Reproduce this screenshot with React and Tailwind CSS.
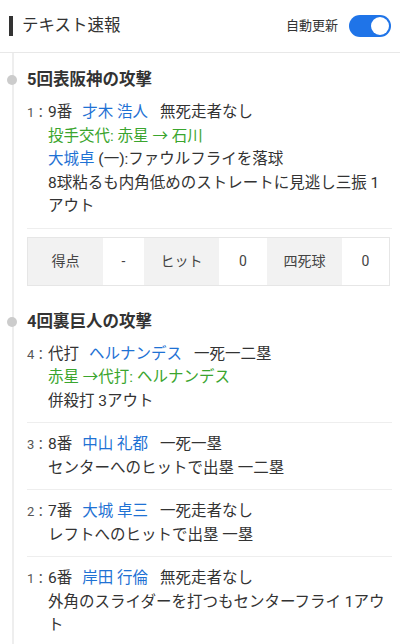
import React, { useState } from "react";

const blue = "text-[#1f72d4]";
const green = "text-[#3aa52e]";

function Head({ order, name, situation }) {
  return (
    <div>
      <span className="mr-[10px]">{order}</span>
      <span className={`${blue} mr-[12px]`}>{name}</span>
      <span>{situation}</span>
    </div>
  );
}

const sections = [
  {
    title: "5回表阪神の攻撃",
    events: [
      {
        no: 1,
        head: { order: "9番", name: "才木 浩人", situation: "無死走者なし" },
        lines: [
          <div className={green}>投手交代: 赤星 → 石川</div>,
          <div>
            <span className={blue}>大城卓</span> (一):ファウルフライを落球
          </div>,
          <div>
            8球粘るも内角低めのストレートに見逃し三振 1<br />アウト
          </div>,
        ],
      },
    ],
    stats: { score: "-", hit: "0", walk: "0" },
  },
  {
    title: "4回裏巨人の攻撃",
    events: [
      {
        no: 4,
        head: { order: "代打", name: "ヘルナンデス", situation: "一死一二塁" },
        lines: [
          <div className={green}>赤星 →代打: ヘルナンデス</div>,
          <div>併殺打 3アウト</div>,
        ],
      },
      {
        no: 3,
        head: { order: "8番", name: "中山 礼都", situation: "一死一塁" },
        lines: [<div>センターへのヒットで出塁 一二塁</div>],
      },
      {
        no: 2,
        head: { order: "7番", name: "大城 卓三", situation: "一死走者なし" },
        lines: [<div>レフトへのヒットで出塁 一塁</div>],
      },
      {
        no: 1,
        head: { order: "6番", name: "岸田 行倫", situation: "無死走者なし" },
        lines: [
          <div>
            外角のスライダーを打つもセンターフライ 1アウ<br />ト
          </div>,
        ],
      },
    ],
  },
];

function Stats({ stats }) {
  return (
    <div className="mt-[8px] flex h-[49px] border border-[#e6e6e6] text-[14px] text-[#444]">
      <div className="flex w-[75px] items-center justify-center bg-[#f2f2f2]">得点</div>
      <div className="flex w-[41px] items-center justify-center bg-white">{stats.score}</div>
      <div className="flex w-[75px] items-center justify-center bg-[#f2f2f2]">ヒット</div>
      <div className="flex w-[48px] items-center justify-center bg-white">{stats.hit}</div>
      <div className="flex w-[75px] items-center justify-center bg-[#f2f2f2]">四死球</div>
      <div className="flex flex-1 items-center justify-center bg-white">{stats.walk}</div>
    </div>
  );
}

export default function App() {
  const [auto, setAuto] = useState(true);

  return (
    <div className="min-h-screen bg-white font-[Roboto,'Noto_Sans_CJK_JP',sans-serif] text-[#333]">
      {/* header */}
      <div className="flex h-[53px] items-center justify-between border-b border-[#e8e8e8]">
        <div className="flex items-center">
          <div className="ml-[9px] h-[20px] w-[4px] bg-[#333]" />
          <h1 className="ml-[9px] text-[16.5px] leading-[24px]">テキスト速報</h1>
        </div>
        <div className="mr-[9px] flex items-center">
          <span className="mr-[11px] text-[13px]">自動更新</span>
          <button
            onClick={() => setAuto(!auto)}
            className={`flex h-[22px] w-[42px] items-center rounded-full px-[2px] ${
              auto ? "justify-end bg-[#1f74e8]" : "justify-start bg-[#ccc]"
            }`}
          >
            <span className="h-[18px] w-[18px] rounded-full bg-white" />
          </button>
        </div>
      </div>

      {/* timeline */}
      <div className="ml-[12px] border-l-2 border-[#eeeeee] pl-[13px] pr-[8px]">
        {sections.map((s, i) => (
          <div key={i} className={i === 0 ? "pt-[16px]" : "pt-[25px]"}>
            <div className="relative text-[16.5px] font-bold leading-[22px]">
              <span className="absolute left-[-20px] top-[6px] h-[10px] w-[10px] rounded-full bg-[#cccccc]" />
              {s.title}
            </div>
            {s.events.map((e, j) => (
              <div
                key={j}
                className="flex border-b border-[#eeeeee] pb-[9px] pt-[10px] text-[15.5px] leading-[23.5px]"
              >
                <div className="w-[21px] shrink-0 whitespace-nowrap text-[13px] text-[#555]">
                  {e.no}：
                </div>
                <div className="flex-1">
                  <Head {...e.head} />
                  {e.lines.map((l, k) => (
                    <React.Fragment key={k}>{l}</React.Fragment>
                  ))}
                </div>
              </div>
            ))}
            {s.stats && (
              <div className="pr-[2px]">
                <Stats stats={s.stats} />
              </div>
            )}
          </div>
        ))}
      </div>
    </div>
  );
}
